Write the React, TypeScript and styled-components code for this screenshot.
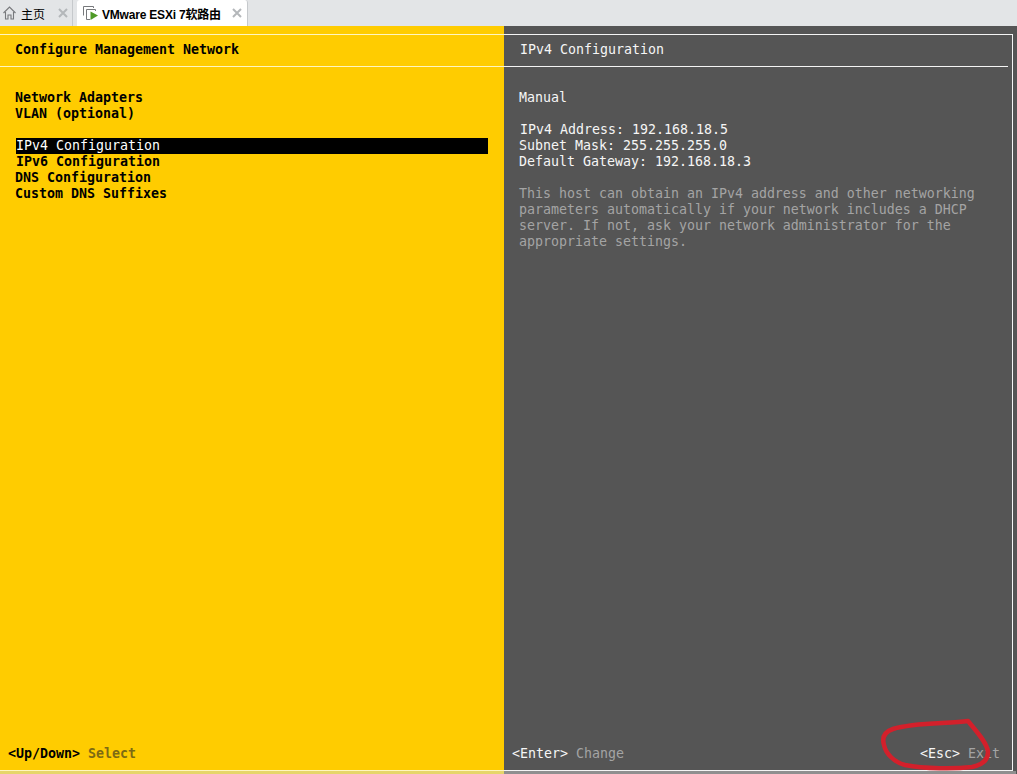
import React from "react";
import styled, { createGlobalStyle } from "styled-components";

const Global = createGlobalStyle`
  html, body { margin: 0; padding: 0; width: 100%; height: 100%; overflow: hidden; background: #e4e6e8; }
  #root { height: 100%; }
`;

const Page = styled.div`
  position: relative;
  width: 1017px;
  height: 774px;
  display: flex;
  flex-direction: column;
  overflow: hidden;
`;

const TabStrip = styled.div`
  height: 26px;
  flex: none;
  display: flex;
  align-items: stretch;
  background: #e3e5e7;
  font-family: "Liberation Sans", "Noto Sans CJK SC", sans-serif;
  font-size: 12px;
  color: #000;
`;

const Tab = styled.div<{ $active?: boolean }>`
  box-sizing: border-box;
  display: flex;
  align-items: center;
  width: ${(p) => (p.$active ? "171px" : "73px")};
  margin-right: ${(p) => (p.$active ? "0" : "4px")};
  padding-left: ${(p) => (p.$active ? "6px" : "3px")};
  background: ${(p) => (p.$active ? "#fff" : "transparent")};
  border-right: 1px solid #c6c9cc;
  border-radius: ${(p) => (p.$active ? "3px 3px 0 0" : "0")};
  font-weight: ${(p) => (p.$active ? 700 : 400)};
`;

const TabLabel = styled.span<{ $active?: boolean }>`
  margin-left: ${(p) => (p.$active ? "3px" : "5px")};
  width: ${(p) => (p.$active ? "128px" : "35px")};
  white-space: nowrap;
  letter-spacing: ${(p) => (p.$active ? "-0.2px" : "0")};
`;

const Console = styled.div`
  flex: 1;
  display: grid;
  grid-template-columns: 504px 1fr;
  font-family: "DejaVu Sans Mono", "Liberation Mono", monospace;
  font-size: 13.29px;
  line-height: 16px;
  white-space: pre;
`;

const Panel = styled.section<{ $dark?: boolean }>`
  display: flex;
  flex-direction: column;
  padding-top: 8px;
  background: ${(p) => (p.$dark ? "#555555" : "#ffcc00")};
  color: ${(p) => (p.$dark ? "#f6f6f6" : "#000")};
`;

const Frame = styled.div<{ $dark?: boolean }>`
  flex: 1;
  display: flex;
  flex-direction: column;
  border-top: 1px solid ${(p) => (p.$dark ? "#f4f4f4" : "#fff6c0")};
  border-bottom: 1px solid ${(p) => (p.$dark ? "#f4f4f4" : "#fff6c0")};
  border-right: ${(p) => (p.$dark ? "1px solid #f4f4f4" : "none")};
  margin-right: ${(p) => (p.$dark ? "4px" : "0")};
`;

const Tail = styled.div<{ $dark?: boolean }>`
  height: 3px;
  flex: none;
  background: ${(p) => (p.$dark ? "#8f8f8f" : "#e6d66a")};
  margin-right: ${(p) => (p.$dark ? "1px" : "0")};
`;

const Header = styled.h1<{ $dark?: boolean }>`
  margin: 0;
  padding: 7px 0 0 ${(p) => (p.$dark ? "16px" : "15px")};
  height: 24px;
  font: inherit;
  font-weight: ${(p) => (p.$dark ? 400 : 700)};
`;

const Rule = styled.div<{ $dark?: boolean }>`
  height: 1px;
  flex: none;
  background: ${(p) => (p.$dark ? "#f4f4f4" : "#fff6c0")};
  margin-right: ${(p) => (p.$dark ? "4px" : "0")};
`;

const Body = styled.div<{ $dark?: boolean }>`
  flex: 1;
  padding: 23px ${(p) => (p.$dark ? "24px" : "16px")} 0 ${(p) => (p.$dark ? "15px" : "15px")};
`;

const Line = styled.div<{ $bold?: boolean; $inset?: boolean }>`
  height: 16px;
  font-weight: ${(p) => (p.$bold ? 700 : 400)};
  padding-left: ${(p) => (p.$inset ? "1px" : "0")};
`;

const Selected = styled.div`
  height: 16px;
  margin: 0 0 0 1px;
  width: 472px;
  background: #000;
  color: #fff;
`;

const Gap = styled.div`
  height: 16px;
`;

const Note = styled.p`
  margin: 0;
  color: #a4a4a4;
`;

const Footer = styled.div<{ $between?: boolean }>`
  flex: none;
  height: 16px;
  padding: 0 ${(p) => (p.$between ? "12px" : "16px")} 8px 8px;
  display: flex;
  justify-content: ${(p) => (p.$between ? "space-between" : "flex-start")};
`;

const Key = styled.span<{ $dark?: boolean }>`
  font-weight: ${(p) => (p.$dark ? 400 : 700)};
`;

const Hint = styled.span<{ $dark?: boolean }>`
  color: ${(p) => (p.$dark ? "#a4a4a4" : "#7d6a14")};
  font-weight: ${(p) => (p.$dark ? 400 : 700)};
`;

const Annotation = styled.svg`
  position: absolute;
  left: 0;
  top: 0;
  pointer-events: none;
`;

const HomeIcon = () => (
  <svg width="13" height="14" viewBox="0 0 13 14" fill="none" stroke="#77797c" strokeWidth="1.1">
    <path d="M0.5 7 L6.5 1 L12.5 7" />
    <path d="M2.5 6 V13 H5 V9 H8 V13 H10.5 V6" />
  </svg>
);

const CloseIcon = ({ left }: { left: number }) => (
  <svg width="10" height="10" viewBox="0 0 10 10" stroke="#b4b7ba" strokeWidth="2" style={{ marginLeft: left }}>
    <path d="M1 1 L9 9 M9 1 L1 9" />
  </svg>
);

const VmIcon = () => (
  <svg width="16" height="16" viewBox="0 0 16 16" fill="none">
    <path d="M0.5 10.5 V1.5 H10.5 V3" stroke="#77797c" />
    <path d="M3.5 14.5 V4.5 H12.5 V6" stroke="#77797c" />
    <path d="M3.5 14.5 H7" stroke="#77797c" />
    <path d="M7.5 6.5 L15 10.5 L7.5 15 Z" fill="#4f9a28" />
  </svg>
);

export default function App() {
  return (
    <Page>
      <Global />
      <TabStrip>
        <Tab>
          <HomeIcon />
          <TabLabel>主页</TabLabel>
          <CloseIcon left={2} />
        </Tab>
        <Tab $active>
          <VmIcon />
          <TabLabel $active>VMware ESXi 7软路由</TabLabel>
          <CloseIcon left={2} />
        </Tab>
      </TabStrip>
      <Console>
        <Panel>
          <Frame>
            <Header>Configure Management Network</Header>
            <Rule />
            <Body>
              <Line $bold>Network Adapters</Line>
              <Line $bold>VLAN (optional)</Line>
              <Gap />
              <Selected>IPv4 Configuration</Selected>
              <Line $bold $inset>IPv6 Configuration</Line>
              <Line $bold>DNS Configuration</Line>
              <Line $bold>Custom DNS Suffixes</Line>
            </Body>
            <Footer>
              <Key>&lt;Up/Down&gt;</Key>
              <Hint> Select</Hint>
            </Footer>
          </Frame>
          <Tail />
        </Panel>
        <Panel $dark>
          <Frame $dark>
            <Header $dark>IPv4 Configuration</Header>
            <Rule $dark />
            <Body $dark>
              <Line>Manual</Line>
              <Gap />
              <Line $inset>IPv4 Address: 192.168.18.5</Line>
              <Line>Subnet Mask: 255.255.255.0</Line>
              <Line>Default Gateway: 192.168.18.3</Line>
              <Gap />
              <Note>
                {"This host can obtain an IPv4 address and other networking\nparameters automatically if your network includes a DHCP\nserver. If not, ask your network administrator for the\nappropriate settings."}
              </Note>
            </Body>
            <Footer $between>
              <span>
                <Key $dark>&lt;Enter&gt;</Key>
                <Hint $dark> Change</Hint>
              </span>
              <span>
                <Key $dark>&lt;Esc&gt;</Key>
                <Hint $dark> Exit</Hint>
              </span>
            </Footer>
          </Frame>
          <Tail $dark />
        </Panel>
      </Console>
      <Annotation width="1017" height="774" viewBox="0 0 1017 774">
        <path
          d="M968 721 C950 724 915 722 893 729 C884 732 882 738 884 745 C886 754 894 762 905 765 C925 769 955 769 972 767 C982 765 988 760 988 752 C987 742 975 730 968 721 Z"
          fill="none"
          stroke="#d3202b"
          strokeWidth="4.5"
          strokeLinejoin="round"
        />
      </Annotation>
    </Page>
  );
}
